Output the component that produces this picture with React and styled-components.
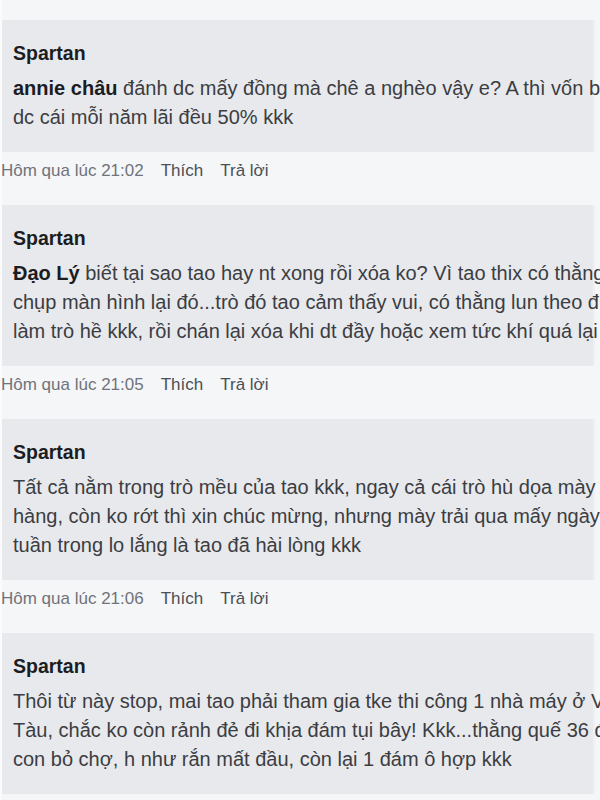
import React from "react";
import styled, { createGlobalStyle } from "styled-components";

const GlobalStyle = createGlobalStyle`
  html, body {
    margin: 0;
    padding: 0;
    background: #f5f6f8;
    overflow: hidden;
  }
  body {
    font-family: "Liberation Sans", Arial, sans-serif;
  }
`;

const comments = [
  {
    id: 1,
    mention: "annie châu",
    lines: [
      " đánh dc mấy đồng mà chê a nghèo vậy e? A thì vốn bé nhưng",
      "dc cái mỗi năm lãi đều 50% kkk",
    ],
    time: "Hôm qua lúc 21:02",
  },
  {
    id: 2,
    mention: "Đạo Lý",
    lines: [
      " biết tại sao tao hay nt xong rồi xóa ko? Vì tao thix có thằng",
      "chụp màn hình lại đó...trò đó tao cảm thấy vui, có thằng lun theo đu",
      "làm trò hề kkk, rồi chán lại xóa khi dt đầy hoặc xem tức khí quá lại",
    ],
    time: "Hôm qua lúc 21:05",
  },
  {
    id: 3,
    lines: [
      "Tất cả nằm trong trò mều của tao kkk, ngay cả cái trò hù dọa mày cũng",
      "hàng, còn ko rớt thì xin chúc mừng, nhưng mày trải qua mấy ngày",
      "tuần trong lo lắng là tao đã hài lòng kkk",
    ],
    time: "Hôm qua lúc 21:06",
  },
  {
    id: 4,
    lines: [
      "Thôi từ này stop, mai tao phải tham gia tke thi công 1 nhà máy ở Vũng",
      "Tàu, chắc ko còn rảnh đẻ đi khịa đám tụi bây! Kkk...thằng quế 36 đã",
      "con bỏ chợ, h như rắn mất đầu, còn lại 1 đám ô hợp kkk",
    ],
    time: null,
  },
];

const App = () => {
  return (
    <>
      <GlobalStyle />
      <Page>
        {comments.map((c) => (
          <Comment key={c.id}>
            <Bubble>
              <Author>Spartan</Author>
              <Body>
                {c.lines.map((line, i) => (
                  <Line key={i}>
                    {i === 0 && c.mention && <Mention>{c.mention}</Mention>}
                    {line}
                  </Line>
                ))}
              </Body>
            </Bubble>
            {c.time && (
              <Meta>
                <Time>{c.time}</Time>
                <Action>Thích</Action>
                <Action>Trả lời</Action>
              </Meta>
            )}
          </Comment>
        ))}
      </Page>
    </>
  );
};

export default App;

const Page = styled.div`
  width: 600px;
  height: 800px;
  overflow: hidden;
  padding-top: 20px;
  box-sizing: border-box;
  border-left: 2px solid #fbfbfc;
`;

const Comment = styled.div`
  display: flex;
  flex-direction: column;
`;

const Bubble = styled.div`
  width: 593px;
  box-sizing: border-box;
  background: #e8e9ed;
  padding: 19px 0 20px 11px;
  border-right: 2px solid #eef0f3;
`;

const Author = styled.div`
  font-size: 19.5px;
  line-height: 29px;
  font-weight: 700;
  color: #1b1d22;
  margin-bottom: 6px;
`;

const Body = styled.div`
  font-size: 20px;
  line-height: 29px;
  color: #3b3d42;
`;

const Line = styled.div`
  white-space: nowrap;
`;

const Mention = styled.span`
  font-weight: 700;
  color: #1b1d22;
`;

const Meta = styled.div`
  display: flex;
  align-items: center;
  gap: 17px;
  height: 53px;
  padding: 9px 0 24px 0;
  box-sizing: border-box;
  margin-left: -1px;
  font-size: 17px;
  line-height: 20px;
`;

const Time = styled.span`
  color: #6f737a;
`;

const Action = styled.span`
  color: #4b4f56;
`;
